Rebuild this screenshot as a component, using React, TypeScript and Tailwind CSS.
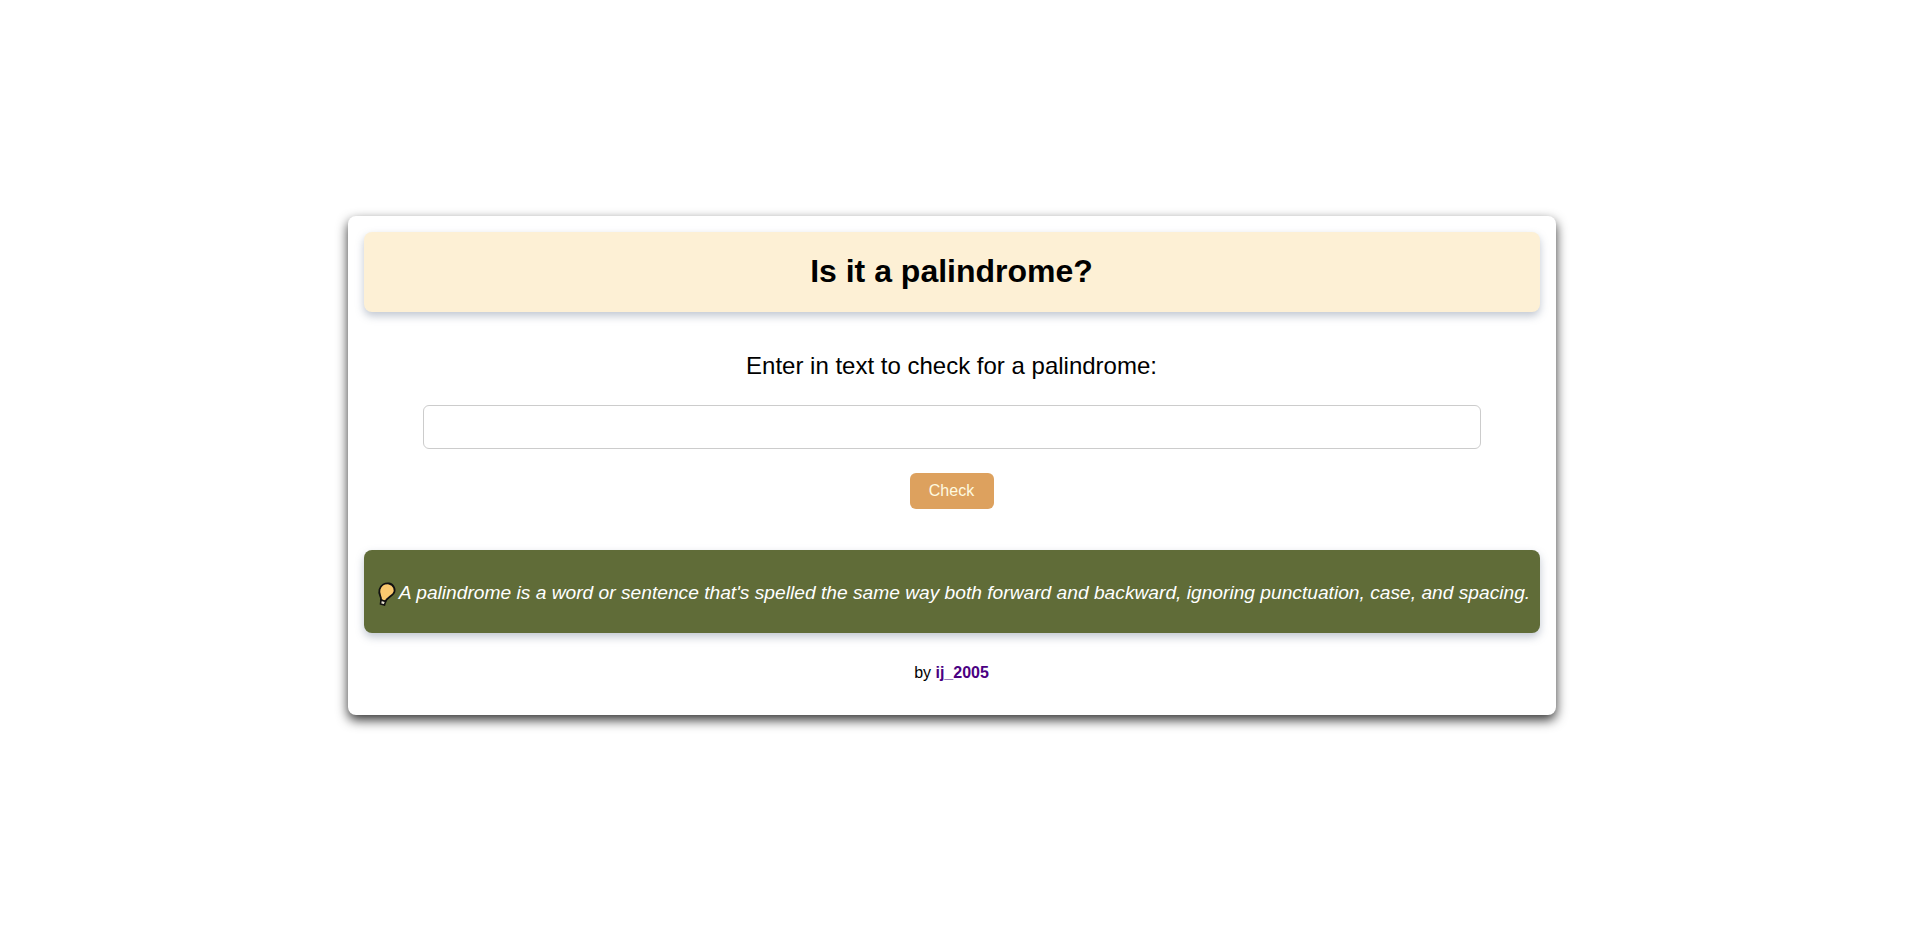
export default function App() {
  return (
    <div className="min-h-screen bg-white flex items-center justify-center pb-1 pr-0.5 font-['Liberation_Sans',Arial,sans-serif] text-black">
      <div className="w-[1208px] bg-white rounded-lg p-4 shadow-[0_5px_12px_rgba(0,0,0,0.8)]">
        {/* Title */}
        <div className="h-20 bg-[#fdf0d5] rounded-lg flex items-center justify-center pb-0.5 shadow-[0_4px_8px_rgba(100,116,139,0.4)]">
          <h1 className="text-[32px] font-bold">Is it a palindrome?</h1>
        </div>

        {/* Form */}
        <div className="flex flex-col items-center">
          <label className="mt-10 text-2xl leading-7">Enter in text to check for a palindrome:</label>
          <input className="mt-[25px] w-[1058px] h-11 border border-[#cccccc] rounded-md outline-none px-2" />
          <button className="mt-6 w-[84px] h-9 bg-[#dda15e] text-[#fefae0] text-base rounded-md">Check</button>
        </div>

        {/* Info */}
        <div className="mt-[41px] h-[83px] bg-[#606c38] rounded-lg flex items-center justify-center gap-0.5 pt-1 pl-0.5 shadow-[0_4px_8px_rgba(100,116,139,0.4)]">
          <svg width="22" height="24" viewBox="0 0 22 24" className="shrink-0">
            <path d="M6 18 C7 15 3 12.5 4.5 7.5 C6 3 10 1 14 1.5 C19 2.5 21 8 18.5 11.5 C16 14.5 12 15.5 10.5 19.5 Z" fill="#fbc96f" stroke="#111111" strokeWidth="1.8" />
            <path d="M6 18 L10.5 19.5 L9.5 23 L5.5 22 Z" fill="#e8e2d2" stroke="#111111" strokeWidth="1.6" />
          </svg>
          <p className="text-[19.2px] italic text-white whitespace-nowrap">A palindrome is a word or sentence that's spelled the same way both forward and backward, ignoring punctuation, case, and spacing.</p>
        </div>

        {/* Footer */}
        <p className="mt-[28px] mb-[14px] text-center text-base">
          by <a className="font-bold text-[#4b0082]">ij_2005</a>
        </p>
      </div>
    </div>
  );
}
